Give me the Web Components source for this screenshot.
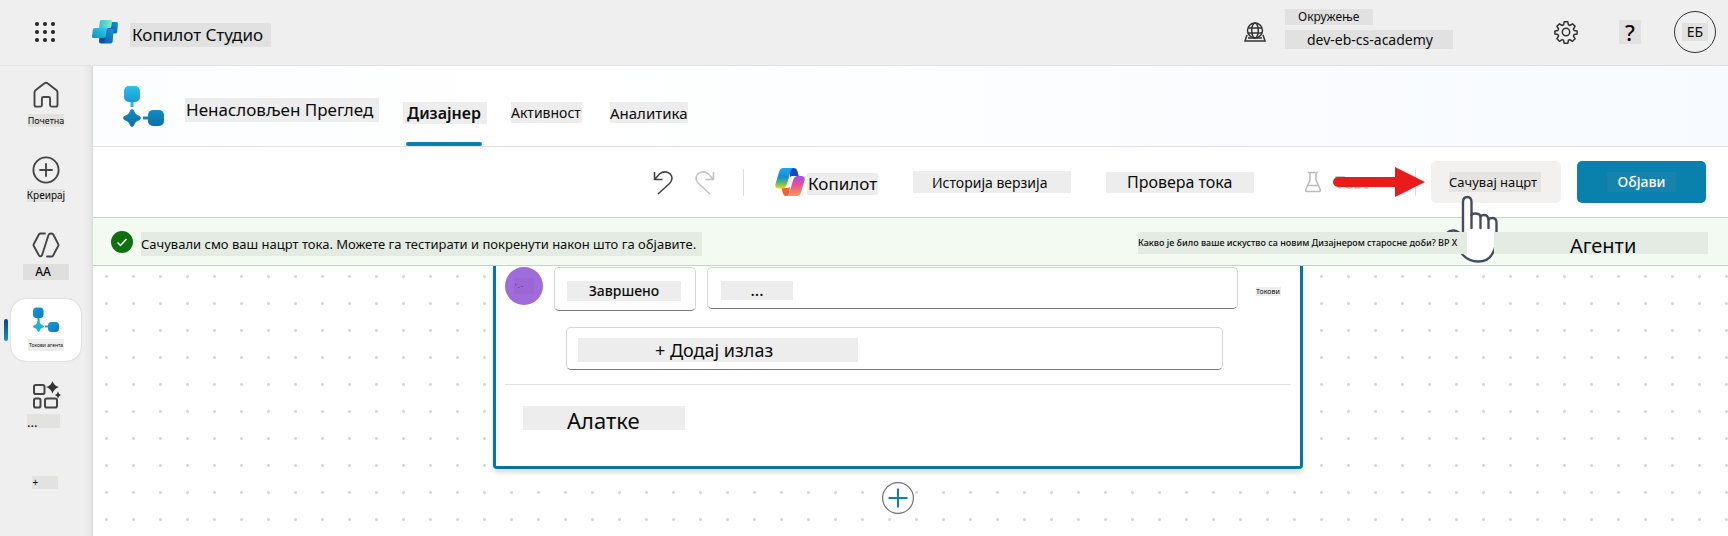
<!DOCTYPE html>
<html lang="sr">
<head>
<meta charset="utf-8">
<title>Копилот Студио</title>
<style>
  body { margin: 0; font-family: "Noto Sans", sans-serif; color: #0c0c0c; background: #efefef; }
</style>
</head>
<body>
<studio-app></studio-app>
<script>
const RESET = `
  *, *::before, *::after { box-sizing: border-box; }
  button { font: inherit; color: inherit; background: none; border: 0; margin: 0; padding: 0; cursor: pointer; }
  a { color: inherit; text-decoration: none; }
  svg { display: block; flex: none; }
`;

const define = (name, css, html) => {
  const template = document.createElement('template');
  template.innerHTML = `<style>${RESET}${css}</style>${html}`;
  customElements.define(name, class extends HTMLElement {
    constructor() {
      super();
      this.attachShadow({ mode: 'open' }).append(template.content.cloneNode(true));
    }
  });
};

const ICONS = {
  waffle: ['0 0 24 24', `<g fill="#222"><circle cx="4" cy="4" r="2"/><circle cx="12" cy="4" r="2"/><circle cx="20" cy="4" r="2"/><circle cx="4" cy="12" r="2"/><circle cx="12" cy="12" r="2"/><circle cx="20" cy="12" r="2"/><circle cx="4" cy="20" r="2"/><circle cx="12" cy="20" r="2"/><circle cx="20" cy="20" r="2"/></g>`],
  logo: ['0 0 26 24', `<defs><linearGradient id="a" x1="0" x2="1"><stop stop-color="#35bfd8"/><stop offset="1" stop-color="#86efbd"/></linearGradient><linearGradient id="b" x1="0" y1="1" x2="1" y2="0"><stop stop-color="#118dc0"/><stop offset="1" stop-color="#35cfe0"/></linearGradient><linearGradient id="c" x1="0" y1="1" x2="1" y2="0"><stop stop-color="#0852b0"/><stop offset="1" stop-color="#1994d4"/></linearGradient></defs>
    <path d="M17 2h7.500Q26 2 26 3.500l-.8 8.500q-.2 1.500-1.800 1.500H14z" fill="url(#c)"/><path d="M12 9h9.500l-.8 12.500q-.2 2-2.200 2H9q-2 0-1.800-2L8 14z" fill="url(#c)"/><path d="M7.500 17h5.500l-.5 6H9q-2 0-1.800-2z" fill="#0750ae"/><path d="M3 8h12l-1.300 8.300q-.3 1.700-2 1.700H1.500Q-.2 18 0 16.300l.8-6.300Q1 8 3 8z" fill="url(#b)"/><path d="M9.500 0h9.300q1.500 0 1.300 1.500l-.8 5Q19 8 17.500 8H7l.8-6.300Q8 0 9.500 0z" fill="url(#a)"/>`],
  globe: ['0 0 24 24', `<g fill="none" stroke="#333" stroke-width="1.500"><circle cx="12" cy="10.500" r="7.500"/><ellipse cx="12" cy="10.500" rx="3.300" ry="7.500"/><path d="M5 8h14M5 13h14M4 15l-2 6h20l-2-6M5 18h14"/></g>`],
  gear: ['0 0 24 24', `<g fill="none" stroke="#333" stroke-width="1.500" stroke-linejoin="round"><circle cx="12" cy="12" r="3.700"/><path d="M10.200 1.800h3.600l.6 3 1.500.7 2.600-1.700 2.600 2.600-1.700 2.600.7 1.500 3 .6v2.800l-3 .7-.7 1.500 1.700 2.600-2.600 2.600-2.600-1.700-1.500.7-.6 3h-3.600l-.6-3-1.500-.7-2.600 1.700-2.600-2.600 1.700-2.600-.7-1.500-3-.7v-2.800l3-.6.7-1.500-1.700-2.600 2.600-2.600 2.600 1.700 1.500-.7z"/></g>`],
  home: ['0 0 28 28', `<path d="M2.500 11.500c0-1 .3-1.600 1-2.200l9-7a2.300 2.300 0 0 1 3 0l9 7c.7.600 1 1.200 1 2.200V24c0 1-.6 1.600-1.600 1.600h-4.300c-1 0-1.500-.6-1.500-1.500v-6.600c0-1-.5-1.500-1.500-1.500h-5.200c-1 0-1.500.5-1.500 1.500v6.600c0 .9-.5 1.500-1.500 1.500H4.100c-1 0-1.600-.6-1.600-1.600z" fill="none" stroke="#454545" stroke-width="1.900"/>`],
  create: ['0 0 28 28', `<g fill="none" stroke="#454545" stroke-width="1.900" stroke-linecap="round"><circle cx="14" cy="14" r="12.600"/><path d="M14 8v12M8 14h12"/></g>`],
  agent: ['0 0 28 28', `<g fill="none" stroke="#454545" stroke-width="1.900" stroke-linecap="round" stroke-linejoin="round"><path d="M13 2.500H8.500q-1 0-1.500.8L1.800 13q-.6 1 0 2L7 24.500q.5.800 1.500.8 1.200 0 1.600-1.300L16.500 4q.5-1.500 2.500-1.500 1.500 0 2.100.8L26.200 13q.6 1 0 2L21 24.700q-.5.800-1.500.8H15"/></g>`],
  flow: ['0 0 41 41', `<defs><linearGradient id="f" x2="0" y2="1"><stop stop-color="#2bc1ec"/><stop offset="1" stop-color="#1899d0"/></linearGradient><linearGradient id="g" x2="0" y2="1"><stop stop-color="#148ec2"/><stop offset="1" stop-color="#0b6ea8"/></linearGradient></defs><rect x="1" y="0" width="16" height="16" rx="5" fill="url(#f)"/><path d="M7.500 16h3v5h-3z" fill="#28b5e4"/><path d="M9 23q1.800 0 2.600 3 .7 2.400 3.400 3.300Q18 30.300 18 32t-3 2.700q-2.700.9-3.400 3.300-.8 3-2.600 3t-2.600-3Q5.700 35.600 3 34.700 0 33.700 0 32t3-2.700Q5.700 28.400 6.400 26q.8-3 2.600-3z" fill="url(#g)"/><path d="M20 30.500h6v3h-6z" fill="#1585bd"/><rect x="25" y="24" width="16" height="16" rx="5" fill="url(#g)"/>`],
  flowSmall: ['0 0 28 28', `<defs><linearGradient id="h" x2="1" y2="1"><stop stop-color="#159bd6"/><stop offset="1" stop-color="#0c79bd"/></linearGradient></defs><rect x="1" y="1.500" width="10.500" height="10.500" rx="3.500" fill="url(#h)"/><path d="M5.500 12h2v4h-2z" fill="#1690cb"/><path d="M6.500 15q1 0 1.500 1.800.5 1.700 2.200 2.200Q12 19.500 12 20.500T10.200 22Q8.500 22.500 8 24.200 7.500 26 6.500 26T5 24.200Q4.500 22.500 2.800 22 1 21.500 1 20.500T2.800 19Q4.500 18.500 5 16.800 5.500 15 6.500 15z" fill="#1db4dc"/><path d="M13 19.500h4v2h-4z" fill="#1ba5d6"/><rect x="16" y="16" width="11" height="10" rx="3.500" fill="url(#h)"/>`],
  tools: ['0 0 30 28', `<g fill="none" stroke="#454545" stroke-width="2"><rect x="3" y="4" width="10.500" height="9" rx="1.800"/><rect x="3" y="17.500" width="6.500" height="9" rx="1.800"/><rect x="14" y="17.500" width="12" height="9" rx="1.800"/></g><path d="M21.500 0q1.500 5 6.500 6-5 1.500-6.500 6.500Q20 7.500 15 6q5-1 6.500-6zM27 10.500q.7 2.800 3 3.500-2.300.7-3 3.500-.7-2.800-3-3.500 2.300-.7 3-3.500z" fill="#333"/>`],
  undo: ['0 0 24 26', `<path d="M3.500 3v7.500h8M4 10l4.500-5q3-2.500 6.500-2 5.500 1 6 6 0 3-2.500 5.500L7 25" fill="none" stroke="currentColor" stroke-width="1.600"/>`],
  redo: ['0 0 24 26', `<path d="M20.500 3v7.500h-8M20 10l-4.500-5q-3-2.500-6.500-2-5.500 1-6 6 0 3 2.500 5.500L17 25" fill="none" stroke="currentColor" stroke-width="1.600"/>`],
  copilot: ['0 0 30 28', `<defs><linearGradient id="k" x2="0" y2="1"><stop stop-color="#18a8f4"/><stop offset=".45" stop-color="#168fd0"/><stop offset=".7" stop-color="#4cba76"/><stop offset="1" stop-color="#f5d413"/></linearGradient><linearGradient id="l" x2="0" y2="1"><stop stop-color="#a34df0"/><stop offset=".45" stop-color="#ec4f93"/><stop offset="1" stop-color="#fd9a58"/></linearGradient></defs><path d="M15 0h4q2.500 0 3.200 2.500L23.800 8H18q-2 0-3 1z" fill="#1747c6"/><path d="M6.500 20H12q2 0 3-1l-1.500 9H11q-2.200 0-3-2.500z" fill="#f4622e"/><path d="M8 0h10q-1.500.5-2.300 3L12 16q-1.300 4.500-4.500 4.500H4q-4.500 0-3.500-4.500L4 4Q5 0 8 0z" fill="url(#k)"/><path d="M22.500 8H26q4.500 0 3.500 4.500L26 24q-1 4-4.500 4H11.500q2-.5 2.800-3.500L18 12.500Q19.300 8 22.500 8z" fill="url(#l)"/>`],
  flask: ['0 0 20 24', `<path d="M5 2.500h10M7 2.500V10L2.800 19.500q-.6 2 1.400 2h11.600q2 0 1.400-2L13 10V2.500M5 15.500h10" fill="none" stroke="#bdbdbd" stroke-width="1.600"/>`],
  arrow: ['0 0 92 30', `<path d="M5 10h57V0l30 15-30 15V20H5A5 5 0 0 1 5 10z" fill="#e81c1c"/>`],
  check: ['0 0 22 22', `<circle cx="11" cy="11" r="11" fill="#0f700f"/><path d="M6.500 11.500l3 3 6-6.500" fill="none" stroke="#fff" stroke-width="1.500"/>`],
  hand: ['0 0 56 68', `<g stroke="#454c5e" stroke-width="2.400" stroke-linejoin="round" stroke-linecap="round"><path d="M19 42Q14 35 9 35.500q-8 1-6 6L19 60q6 6.500 15 6.500 11 0 15-9 3.500-6 3.500-15V28q0-5-4-5-2.500 0-4 1.500Q44 20 40 20q-2 0-3.500 1.500Q36 18.500 31 18.500q-2.500 0-3.500 1.500V7q0-5-4.200-5T19 7z" fill="#fff"/><path d="M27.500 20v13M36.500 22v11M44.500 24v9" fill="none"/></g>`],
  plus: ['0 0 32 32', `<circle cx="16" cy="16" r="15.400" fill="#fff" stroke="#707070" stroke-width="1.200"/><path d="M16 6.500v19M6.500 16h19" stroke="#0a80ad" stroke-width="2"/>`]
};
const icon = (name, w, h = w, cls = '') =>
  `<svg class="${cls}" width="${w}" height="${h}" viewBox="${ICONS[name][0]}" aria-hidden="true">${ICONS[name][1]}</svg>`;

/* Text on a flat tinted plate; the user sets padding, size and tint. */
define('text-plate', `
  :host { display: block; flex: none; white-space: nowrap; line-height: 20px; background: var(--plate, #ededed); }
`, `<slot></slot>`);

define('app-header', `
  :host { display: flex; align-items: center; height: 66px; padding: 0 12px 1px 33px; background: #efefef; border-bottom: 1px solid #e2e2e2; --plate: #e1e1e1; }
  .logo { margin: 0 12px 0 35px; }
  .name { width: 141px; font-size: 17px; line-height: 24px; padding-left: 2px; margin-top: 6px; }
  .env { display: flex; gap: 18px; margin: 0 101px 0 auto; align-items: center; }
  .lines { display: flex; flex-direction: column; align-items: flex-start; gap: 5px; width: 168px; margin-bottom: 6px; }
  .cap { font-size: 12px; line-height: 16px; padding: 0 14px 0 13px; }
  .val { font-size: 14px; line-height: 19px; padding: 0 22px; align-self: stretch; }
  .help { margin: 0 33px 0 41px; }
  .q { width: 22px; text-align: center; font-size: 22px; line-height: 24px; font-weight: 500; }
  .user { width: 42px; height: 42px; border: 1px solid #333; border-radius: 50%; display: grid; place-items: center; }
  .who { font-size: 14px; line-height: 18px; padding: 0 5px; }
`, `
  <button aria-label="Мени">${icon('waffle', 24)}</button>
  <span class="logo">${icon('logo', 26, 24)}</span>
  <text-plate class="name">Копилот Студио</text-plate>
  <div class="env">${icon('globe', 24)}<div class="lines"><text-plate class="cap">Окружење</text-plate><text-plate class="val">dev-eb-cs-academy</text-plate></div></div>
  <button aria-label="Подешавања">${icon('gear', 24)}</button>
  <button class="help"><text-plate class="q">?</text-plate></button>
  <button class="user"><text-plate class="who">ЕБ</text-plate></button>
`);

define('nav-item', `
  :host { display: block; position: relative; height: 62px; --plate: #e2e2e0; }
  a { display: flex; flex-direction: column; align-items: center; gap: 5px; height: 62px; padding-top: 7px; border-radius: 15px; }
  :host([current]) a { background: #fff; box-shadow: 0 0 2px #0003; --plate: #ededed; }
  :host([current])::before { content: ""; position: absolute; left: -7px; top: 20px; width: 4px; height: 22px; border-radius: 2px; background: linear-gradient(#0c3f93, #1391c8); }
  :host([bare]) a { padding-top: 27px; }
`, `<a href="#"><slot name="icon"></slot><slot></slot></a>`);

define('side-nav', `
  :host { display: flex; flex-direction: column; gap: 13px; flex: none; width: 93px; padding: 8px 12px 0 11px; background: linear-gradient(90deg, #efefef 84px, #ebebeb 86px, #e9e9e9 90px, #d9d9d9); }
  text-plate { line-height: 13px; }
  .s9 { font-size: 9px; } .s10 { font-size: 10px; }
  .aa { width: 46px; padding-right: 6px; text-align: center; font-size: 12px; line-height: 16px; font-weight: 500; --plate: #dfdfdd; }
  .tiny { width: 36px; text-align: center; font-size: 5px; line-height: 12px; }
  .dots { width: 33px; height: 14px; font-size: 13px; line-height: 16px; margin-right: 5px; }
  .add { width: 26px; padding-left: 1px; font-size: 10px; margin-right: 3px; }
`, `
  <nav-item><span slot="icon">${icon('home', 28)}</span><text-plate class="s9">Почетна</text-plate></nav-item>
  <nav-item><span slot="icon">${icon('create', 28)}</span><text-plate class="s10">Креирај</text-plate></nav-item>
  <nav-item><span slot="icon">${icon('agent', 28)}</span><text-plate class="aa">АА</text-plate></nav-item>
  <nav-item current><span slot="icon">${icon('flowSmall', 28)}</span><text-plate class="tiny">Токови агента</text-plate></nav-item>
  <nav-item><span slot="icon">${icon('tools', 30, 28)}</span><text-plate class="dots">...</text-plate></nav-item>
  <nav-item bare><text-plate class="add">+</text-plate></nav-item>
`);

define('flow-tab', `
  :host { display: block; flex: none; }
  a { position: relative; display: flex; align-items: center; height: 80px; padding-top: 13px; }
  :host([current]) a::after { content: ""; position: absolute; left: 3px; right: 5px; bottom: 0; height: 4px; border-radius: 2px; background: #0a80ad; }
`, `<a href="#"><slot></slot></a>`);

define('flow-tabs', `
  :host { display: flex; align-items: center; height: 81px; padding-left: 30px; border-bottom: 1px solid #e0e2e4; background: linear-gradient(90deg, #fcfdff, #fff 28%, #fbfdff 60%, #f7faff); }
  .title { width: 194px; margin: 8px 24px 0 21px; font-size: 17px; line-height: 24px; padding-left: 1px; }
  .on { width: 84px; font-size: 16px; line-height: 22px; font-weight: 600; padding-left: 4px; }
  .s14 { width: 71px; font-size: 14px; } .s15 { width: 78px; font-size: 15px; }
  .s14, .s15 { padding-top: 1px; }
  flow-tab + flow-tab { margin-left: 24px; }
  flow-tab + flow-tab:last-child { margin-left: 28px; }
`, `
  ${icon('flow', 41)}
  <text-plate class="title">Ненасловљен Преглед</text-plate>
  <flow-tab current><text-plate class="on">Дизајнер</text-plate></flow-tab>
  <flow-tab><text-plate class="s14">Активност</text-plate></flow-tab>
  <flow-tab><text-plate class="s15">Аналитика</text-plate></flow-tab>
`);

define('flow-toolbar', `
  :host { display: flex; align-items: center; justify-content: flex-end; height: 70px; padding: 0 22px 0 24px; background: #fff; }
  button { display: flex; flex: none; align-items: center; justify-content: center; }
  .undo { color: #444; margin-right: 18px; }
  .redo { color: #c4c4c4; }
  hr { width: 1px; height: 27px; margin: 0; border: 0; background: #dedede; flex: none; }
  .first { margin: 0 31px 0 26px; }
  .copilot { width: 102px; gap: 2px; justify-content: flex-start; }
  .copilot text-plate { font-size: 17px; line-height: 22px; padding: 0 1px; margin-top: 4px; }
  .history { margin: 0 35px 0 36px; }
  .history text-plate { width: 158px; padding: 1px 0 0 19px; text-align: left; font-size: 14px; line-height: 21px; }
  .verify text-plate { width: 148px; padding-left: 21px; text-align: left; font-size: 16px; line-height: 21px; }
  .test { position: relative; display: flex; align-items: center; justify-content: space-between; width: 113px; margin: 0 15px 0 49px; flex: none; }
  .test button { gap: 12px; color: #c9c9c9; font-size: 17px; font-weight: 600; }
  .arrow { position: absolute; left: 30px; top: -2px; }
  .save, .publish { height: 42px; border-radius: 5px; }
  .save { width: 130px; background: #f3f1f0; margin-right: 16px; --plate: #e5e4e2; }
  .save text-plate { width: 92px; text-align: left; margin-right: 2px; font-size: 13px; }
  .publish { width: 129px; background: #0a80ad; color: #fff; --plate: #1583ae; }
  .publish text-plate { width: 69px; font-size: 14px; font-weight: 500; }
`, `
  <button class="undo" aria-label="Опозови">${icon('undo', 24, 26)}</button>
  <button class="redo" aria-label="Понови">${icon('redo', 24, 26)}</button>
  <hr class="first">
  <button class="copilot">${icon('copilot', 30, 28)}<text-plate>Копилот</text-plate></button>
  <button class="history"><text-plate>Историја верзија</text-plate></button>
  <button class="verify"><text-plate>Провера тока</text-plate></button>
  <div class="test"><button disabled>${icon('flask', 20, 24)}<span>Test</span></button><hr>${icon('arrow', 92, 30, 'arrow')}</div>
  <button class="save"><text-plate>Сачувај нацрт</text-plate></button>
  <button class="publish"><text-plate>Објави</text-plate></button>
`);

define('save-banner', `
  :host { position: relative; z-index: 2; display: flex; align-items: center; height: 49px; padding: 0 20px 0 18px; background: #f2faf2; border: solid #b4dfb4; border-width: 1px 0; --plate: #e4ebe3; }
  text-plate { position: relative; line-height: 22px; }
  .msg { width: 561px; font-size: 13px; line-height: 24px; margin: 4px auto 0 8px; }
  .ask { width: 329px; height: 22px; font-size: 9px; font-weight: 500; margin: 3px 27px 0 0; }
  .agents { width: 214px; height: 22px; padding: 2px 0 0 76px; font-size: 20px; line-height: 24px; margin-top: 3px; }
  .hand { position: absolute; right: 228px; top: -23px; }
`, `
  ${icon('check', 22)}
  <text-plate class="msg" role="status">Сачували смо ваш нацрт тока. Можете га тестирати и покренути након што га објавите.</text-plate>
  ${icon('hand', 56, 68, 'hand')}
  <text-plate class="ask">Какво је било ваше искуство са новим Дизајнером старосне доби? ВР X</text-plate>
  <text-plate class="agents">Агенти</text-plate>
`);

define('agent-card', `
  :host { display: block; width: 100%; max-width: 810px; padding: 0 9px; background: #fff; border: solid #0675a0; border-width: 0 3px 3px; border-radius: 0 0 4px 4px; box-shadow: 0 4px 5px #0002; }
  .row { display: flex; align-items: flex-start; padding: 1px 10px 0 0; }
  .dot { width: 38px; height: 38px; margin-right: 11px; border-radius: 50%; background: #a06cdc; display: grid; place-items: center; --plate: #9a67d3; }
  .dot text-plate { width: 20px; padding-left: 1px; font-size: 6px; line-height: 16px; }
  .box { display: flex; align-items: center; border: 1px solid #d6d6d6; border-bottom-color: #777; border-radius: 5px; background: #fff; }
  .kind { width: 142px; height: 44px; padding: 4px 0 0 12px; margin-right: 11px; }
  .kind text-plate { width: 114px; text-align: center; font-size: 14px; font-weight: 500; }
  .value { flex: 1; height: 42px; padding: 4px 0 0 13px; }
  .value input { width: 72px; height: 19px; padding: 0; border: 0; outline: 0; background: #ededed; text-align: center; font: 500 16px/19px "Noto Sans", sans-serif; color: inherit; }
  .flow { width: 25px; margin: 20px 0 0 18px; font-size: 7px; line-height: 9px; }
  .add { width: calc(100% - 129px); height: 43px; margin: 16px 0 14px 61px; padding: 3px 0 0 11px; }
  .add text-plate { width: 280px; padding-left: 77px; text-align: left; font-size: 18px; line-height: 24px; }
  hr { margin: 0; border: 0; height: 1px; background: #e2e2e2; }
  h2 { display: flex; margin: 21px 0 36px 18px; font-size: 22px; font-weight: 400; }
  h2 text-plate { width: 162px; height: 24px; padding-left: 44px; line-height: 28px; }
`, `
  <div class="row">
    <div class="dot"><text-plate>' . -</text-plate></div>
    <button class="box kind"><text-plate>Завршено</text-plate></button>
    <label class="box value"><input value="..." aria-label="Вредност"></label>
    <text-plate class="flow">Токови</text-plate>
  </div>
  <button class="box add"><text-plate>+ Додај излаз</text-plate></button>
  <hr>
  <h2><text-plate>Алатке</text-plate></h2>
`);

define('flow-canvas', `
  :host { display: flex; flex: 1; flex-direction: column; align-items: center; gap: 13px; padding: 0 25px 22px 0; background: #fff radial-gradient(circle, #d8d8d8 1px, transparent 2px) 0 -3px / 27px 27px; }
`, `
  <agent-card></agent-card>
  <button aria-label="Додај корак">${icon('plus', 32)}</button>
`);

define('studio-app', `
  :host { display: flex; flex-direction: column; min-height: 100vh; }
  .body { display: flex; flex: 1; }
  main { display: flex; flex: 1; flex-direction: column; min-width: 0; }
`, `
  <app-header></app-header>
  <div class="body">
    <side-nav></side-nav>
    <main>
      <flow-tabs></flow-tabs>
      <flow-toolbar></flow-toolbar>
      <save-banner></save-banner>
      <flow-canvas></flow-canvas>
    </main>
  </div>
`);
</script>
</body>
</html>
